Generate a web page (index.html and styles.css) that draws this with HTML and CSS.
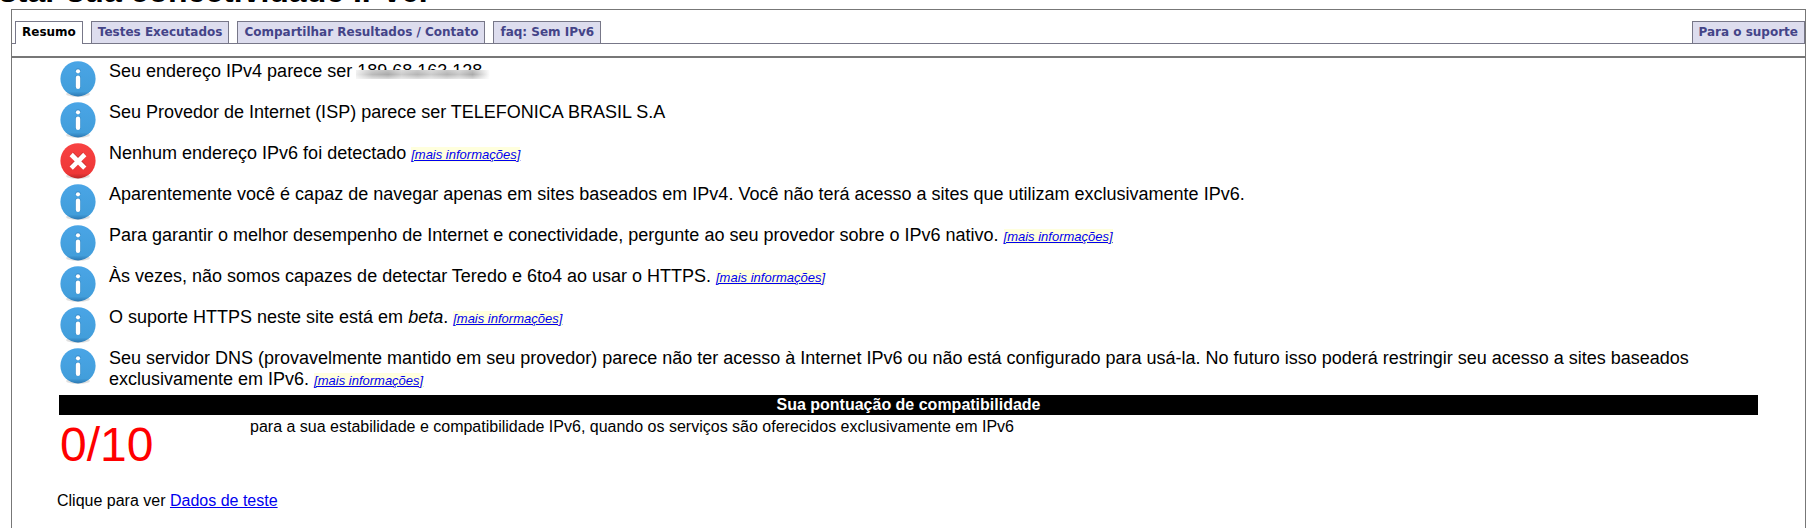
FILE: index.html
```
<!DOCTYPE html>
<html lang="pt-BR">
<head>
    <meta charset="UTF-8">
    <meta name="viewport" content="width=device-width, initial-scale=1.0">
    <title>Testar sua conectividade IPv6.</title>
    <link rel="stylesheet" href="styles.css">
</head>
<body>
    <!-- Ícones reutilizados na lista de resultados -->
    <svg class="sprite" aria-hidden="true">
        <defs>
            <linearGradient id="blue" x1="0" y1="0" x2="0" y2="1">
                <stop offset="0" stop-color="#4aa5e6"/>
                <stop offset="0.86" stop-color="#429edb"/>
                <stop offset="1" stop-color="#2c78b2"/>
            </linearGradient>
            <linearGradient id="red" x1="0" y1="0" x2="0" y2="1">
                <stop offset="0" stop-color="#f84242"/>
                <stop offset="0.86" stop-color="#ee3737"/>
                <stop offset="1" stop-color="#b82828"/>
            </linearGradient>
        </defs>
        <symbol id="info" viewBox="0 0 36 36">
            <ellipse cx="18" cy="33" rx="12" ry="3" fill="#000" opacity="0.12"/>
            <circle cx="18" cy="17.8" r="17.6" fill="url(#blue)"/>
            <circle cx="18" cy="9.8" r="2.6" fill="#2f7cb5" opacity="0.6"/>
            <circle cx="18" cy="10.3" r="2.1" fill="#fff"/>
            <rect x="15.2" y="14" width="5.6" height="14" rx="2.8" fill="#2f7cb5" opacity="0.5"/>
            <rect x="15.8" y="14.6" width="4.4" height="13.4" rx="2.2" fill="#fff"/>
        </symbol>
        <symbol id="error" viewBox="0 0 36 36">
            <ellipse cx="18" cy="33" rx="12" ry="3" fill="#000" opacity="0.12"/>
            <circle cx="18" cy="17.8" r="17.6" fill="url(#red)"/>
            <path d="M11.5 11L24.5 24M24.5 11L11.5 24" stroke="#a82727" stroke-width="5" opacity="0.6"/>
            <path d="M11.2 11.5L24.8 25.1M24.8 11.5L11.2 25.1" stroke="#fff" stroke-width="4.6"/>
        </symbol>
    </svg>

    <header class="masthead">
        <h1>Testar sua conectividade IPv6.</h1>
    </header>

    <main class="box">
        <nav class="tabs">
            <a class="tab active" href="#resumo">Resumo</a>
            <a class="tab" href="#testes">Testes Executados</a>
            <a class="tab" href="#compartilhar">Compartilhar Resultados / Contato</a>
            <a class="tab" href="#faq">faq: Sem IPv6</a>
            <a class="tab tab-right" href="#suporte">Para o suporte</a>
        </nav>

        <section class="content" id="resumo">
            <ul class="results">
                <li>
                    <svg class="icon"><use href="#info"/></svg>
                    <p>Seu endereço IPv4 parece ser <span class="masked">189.68.163.128</span></p>
                </li>
                <li>
                    <svg class="icon"><use href="#info"/></svg>
                    <p>Seu Provedor de Internet (ISP) parece ser TELEFONICA BRASIL S.A</p>
                </li>
                <li>
                    <svg class="icon"><use href="#error"/></svg>
                    <p>Nenhum endereço IPv6 foi detectado <a class="more" href="#faq">[mais informações]</a></p>
                </li>
                <li>
                    <svg class="icon"><use href="#info"/></svg>
                    <p>Aparentemente você é capaz de navegar apenas em sites baseados em IPv4. Você não terá acesso a sites que utilizam exclusivamente IPv6.</p>
                </li>
                <li>
                    <svg class="icon"><use href="#info"/></svg>
                    <p>Para garantir o melhor desempenho de Internet e conectividade, pergunte ao seu provedor sobre o IPv6 nativo. <a class="more" href="#faq">[mais informações]</a></p>
                </li>
                <li>
                    <svg class="icon"><use href="#info"/></svg>
                    <p>Às vezes, não somos capazes de detectar Teredo e 6to4 ao usar o HTTPS. <a class="more" href="#faq">[mais informações]</a></p>
                </li>
                <li>
                    <svg class="icon"><use href="#info"/></svg>
                    <p>O suporte HTTPS neste site está em <em>beta</em>. <a class="more" href="#faq">[mais informações]</a></p>
                </li>
                <li>
                    <svg class="icon"><use href="#info"/></svg>
                    <p>Seu servidor DNS (provavelmente mantido em seu provedor) parece não ter acesso à Internet IPv6 ou não está configurado para usá-la. No futuro isso poderá restringir seu acesso a sites baseados exclusivamente em IPv6. <a class="more" href="#faq">[mais informações]</a></p>
                </li>
            </ul>

            <h2>Sua pontuação de compatibilidade</h2>
            <div class="score">
                <span class="score-value">0/10</span>
                <p>para a sua estabilidade e compatibilidade IPv6, quando os serviços são oferecidos exclusivamente em IPv6</p>
            </div>

            <p class="test-data">Clique para ver <a href="#testes">Dados de teste</a></p>
        </section>
    </main>
</body>
</html>
```
FILE: styles.css
```
* {
    margin: 0;
    padding: 0;
    box-sizing: border-box;
}

html,
body {
    height: 100%;
}

body {
    display: flex;
    flex-direction: column;
    background-color: #fff;
    color: #000;
    font-family: "Liberation Sans", Arial, sans-serif;
    font-size: 16px;
    line-height: 20px;
    overflow: hidden;
}

a {
    color: #0000ee;
}

.sprite {
    position: absolute;
    width: 0;
    height: 0;
}

.masthead {
    display: flex;
    align-items: flex-end;
    flex: none;
    height: 9px;
    overflow: hidden;
}

h1 {
    margin-left: -36px;
    font-size: 32px;
    line-height: 36px;
    white-space: nowrap;
}

.box {
    flex: 1;
    margin: 0 9px 0 11px;
    border: 1px solid #777;
    border-bottom: none;
}

/* Abas */
.tabs {
    display: flex;
    gap: 8px;
    margin-top: 11px;
    padding-left: 3px;
    border-bottom: 1px solid #778;
    font: bold 12px/15px Verdana, "DejaVu Sans", sans-serif;
}

.tab {
    padding: 3px 6px;
    border: 1px solid #778;
    border-bottom: none;
    background-color: #dde;
    color: #448;
    text-decoration: none;
    white-space: nowrap;
}

.tab.active {
    margin-bottom: -1px;
    background-color: #fff;
    color: #000;
}

.tab-right {
    margin-left: auto;
}

.content {
    margin-top: 12px;
    padding: 3px 47px 0 45px;
    border-top: 2px solid #777;
}

/* Lista de resultados */
.results {
    list-style: none;
}

.results li {
    display: flex;
    gap: 13px;
    min-height: 41px;
    padding-left: 3px;
    padding-right: 60px;
    font-size: 18px;
    line-height: 21px;
}

.icon {
    flex: none;
    width: 36px;
    height: 36px;
}

.more {
    background-color: #ffd;
    font-size: 13px;
    font-style: italic;
}

.masked {
    position: relative;
}

.masked::after {
    content: "";
    position: absolute;
    left: -1px;
    right: -8px;
    bottom: 2px;
    height: 9px;
    background:
        linear-gradient(rgba(255, 255, 255, 0.3), transparent 50%, rgba(255, 255, 255, 0.6)),
        linear-gradient(90deg, #eee, #bbb 12%, #aaa 24%, #ccc 34%, #b5b5b5 46%, #ccc 56%, #b4b4b4 68%, #c8c8c8 77%, #aaa 87%, #fff);
}

/* Pontuação */
h2 {
    margin: 4px 0 0 2px;
    background-color: #000;
    color: #fff;
    font-size: 16px;
    line-height: 20px;
    text-align: center;
}

.score {
    display: flex;
    padding: 2px 0 0 3px;
}

.score-value {
    flex: none;
    width: 190px;
    color: #f00;
    font-size: 48px;
    line-height: 56px;
}

.test-data {
    margin-top: 18px;
}
```
